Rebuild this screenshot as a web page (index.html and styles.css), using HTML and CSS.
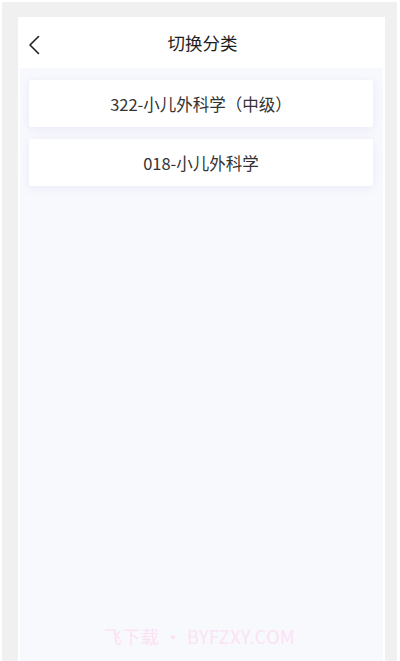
FILE: index.html
```html
<!DOCTYPE html>
<html lang="zh">
<head>
<meta charset="utf-8">
<link rel="stylesheet" href="styles.css">
</head>
<body>
<div class="screen">
  <div class="panel">
    <header class="header">
      <span class="back">
        <svg width="12" height="20" viewBox="0 0 12 20"><path d="M10.5 1.5 L2 10 L10.5 18.5" fill="none" stroke="#222" stroke-width="1.6" stroke-linecap="round" stroke-linejoin="round"/></svg>
      </span>
      <h1 class="title">切换分类</h1>
    </header>
    <main class="content">
      <div class="card">322-小儿外科学（中级）</div>
      <div class="card">018-小儿外科学</div>
    </main>
  </div>
  <div class="watermark">飞下载 • BYFZXY.COM</div>
</div>
</body>
</html>
```
FILE: styles.css
```css
html { background: #ffffff; }
body {
  margin: 0;
  font-family: "Noto Sans CJK SC", "Noto Sans", sans-serif;
}
.screen {
  position: relative;
  margin: 2px 3px 0 2px;
  height: 659px;
  background: #f0f0f0;
  padding: 15px 12px 0 16px;
  box-sizing: border-box;
  display: flex;
  flex-direction: column;
}
.panel {
  flex: 1;
  background: #ffffff;
  padding: 0 2px;
  display: flex;
  flex-direction: column;
}
.header {
  position: relative;
  height: 51px;
  display: flex;
  align-items: center;
  justify-content: center;
  flex-shrink: 0;
}
.back {
  position: absolute;
  left: 8px;
  top: 18px;
  display: flex;
}
.title {
  margin: 0;
  font-size: 17.5px;
  font-weight: 400;
  color: #1e1e1e;
  transform: translateX(1px);
}
.content {
  flex: 1;
  background: #f8f9fd;
  padding: 12px 10px 0 9px;
  display: flex;
  flex-direction: column;
  gap: 12px;
}
.card {
  height: 47px;
  background: #ffffff;
  border-radius: 2px;
  box-shadow: 0 2px 8px rgba(200, 210, 235, 0.35);
  display: flex;
  align-items: center;
  justify-content: center;
  font-size: 16.5px;
  color: #333;
}
.watermark {
  position: absolute;
  left: 0;
  right: 0;
  bottom: 12px;
  text-align: center;
  font-size: 18px;
  color: #fbe2f4;
  letter-spacing: 0.5px;
}
```
